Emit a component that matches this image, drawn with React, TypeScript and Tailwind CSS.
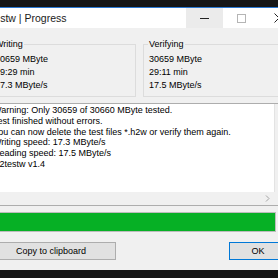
export default function App() {
  return (
    <div className="h-[278px] w-[278px] overflow-hidden bg-[#161616] font-['Liberation_Sans',Arial,sans-serif] text-black">
      <div className="mt-[7px] ml-[-40px] flex h-[263px] w-[337px] flex-col border-t border-[#2b78d0]">
        {/* title bar */}
        <div className="flex h-[20px] items-center bg-white">
          <span className="pl-[18px] text-[10.5px] leading-none text-[#1a1a1a]">H2testw | Progress</span>
          <div className="ml-auto flex h-full">
            <div className="flex h-full w-[37px] items-center justify-center bg-[#ebebeb]">
              <div className="h-px w-[9px] bg-[#222]" />
            </div>
            <div className="flex h-full w-[37px] items-center justify-center">
              <div className="h-[9px] w-[9px] border border-[#b5b5b5]" />
            </div>
            <div className="flex h-full w-[37px] items-center justify-center">
              <svg width="10" height="10" viewBox="0 0 10 10">
                <path d="M0.5 0.5 L9.5 9.5 M9.5 0.5 L0.5 9.5" stroke="#222" strokeWidth="1" />
              </svg>
            </div>
          </div>
        </div>

        {/* body */}
        <div className="flex flex-1 flex-col bg-[#f0f0f0] pr-[7px] pl-[29px] text-[9px]">
          <div className="mt-[10px] flex gap-[7px]">
            <GroupBox title="Writing" rows={["30659 MByte", "29:29 min", "17.3 MByte/s"]} width="w-[147px]" />
            <GroupBox title="Verifying" rows={["30659 MByte", "29:11 min", "17.5 MByte/s"]} width="flex-1" />
          </div>

          {/* log text box */}
          <div className="mt-[6px] flex h-[103px] flex-col border border-[#adadad] bg-white">
            <div className="flex min-h-0 flex-1">
              <div className="flex-1 pt-px pl-[3px] leading-[10.8px] whitespace-nowrap">
                <div>Warning: Only 30659 of 30660 MByte tested.</div>
                <div>Test finished without errors.</div>
                <div>You can now delete the test files *.h2w or verify them again.</div>
                <div>Writing speed: 17.3 MByte/s</div>
                <div>Reading speed: 17.5 MByte/s</div>
                <div>H2testw v1.4</div>
              </div>
              <div className="w-[15px] border-l border-[#e3e3e3] bg-[#f0f0f0]" />
            </div>
            <div className="flex h-[13px] bg-[#f0f0f0]">
              <div className="flex-1" />
              <div className="flex w-[13px] items-center justify-center">
                <svg width="5" height="7" viewBox="0 0 5 7">
                  <path d="M1 0.5 L4 3.5 L1 6.5" fill="none" stroke="#a3a3a3" strokeWidth="1" />
                </svg>
              </div>
              <div className="w-[15px]" />
            </div>
          </div>

          {/* progress bar */}
          <div className="mt-[6px] h-[20px] w-[287px] border border-[#bcbcbc] bg-[#e6e6e6]">
            <div className="h-full w-full bg-[#06b025]" />
          </div>

          {/* buttons */}
          <div className="mt-[10px] flex h-[18px] items-stretch justify-between">
            <button className="ml-[-3px] w-[130px] border border-[#adadad] bg-[#e1e1e1] text-[9px] leading-none text-black">
              Copy to clipboard
            </button>
            <button className="mr-[3px] w-[58px] border border-[#0078d7] bg-[#e1e1e1] text-[9px] leading-none text-black">
              OK
            </button>
          </div>
        </div>
      </div>
    </div>
  );
}

function GroupBox({ title, rows, width }: { title: string; rows: string[]; width: string }) {
  return (
    <fieldset className={`${width} border border-[#dcdcdc] pb-[4px] pl-[4px]`}>
      <legend className="px-px leading-[12px]">{title}</legend>
      <div className="pt-[3px] pl-px leading-[13px] whitespace-nowrap">
        {rows.map((r) => (
          <div key={r}>{r}</div>
        ))}
      </div>
    </fieldset>
  );
}
